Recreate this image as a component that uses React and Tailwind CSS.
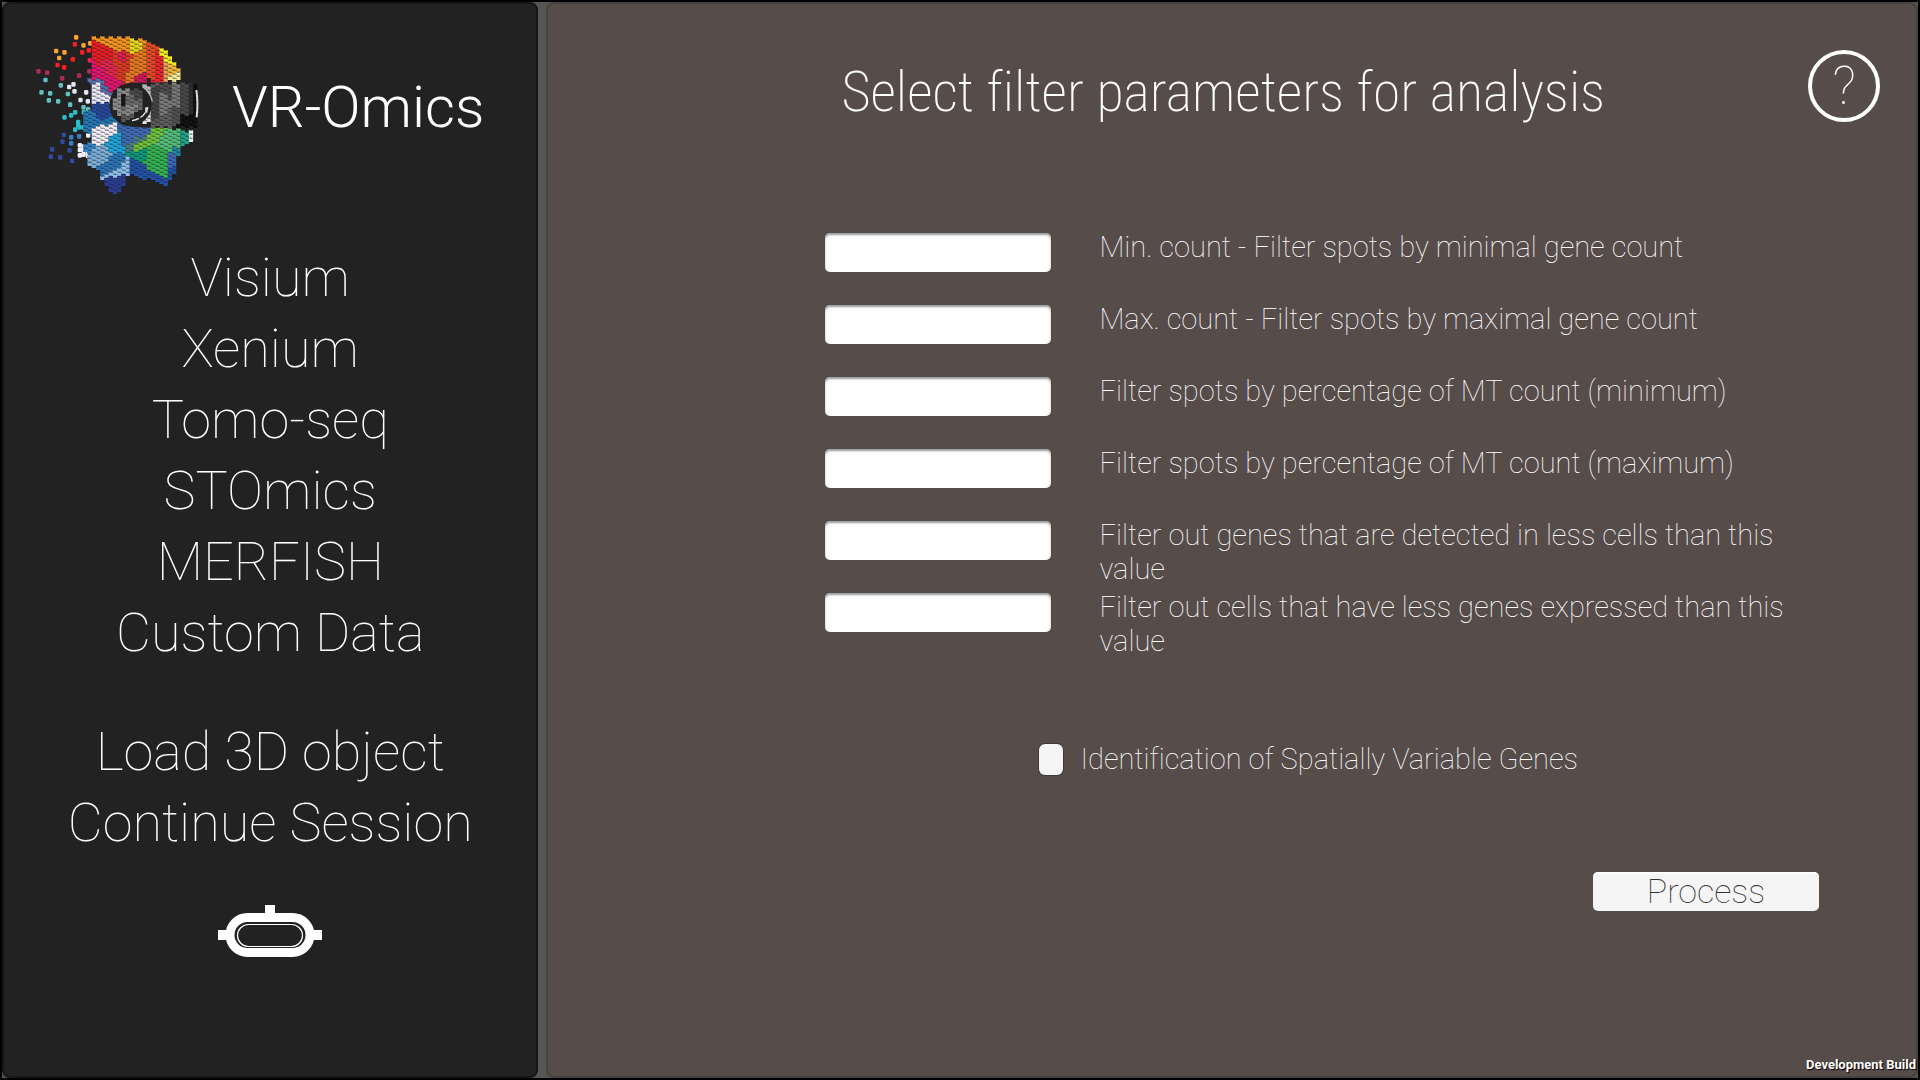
import React from "react";

/* ---------- Logo mosaic ---------- */

const COL = 12.67;
const ROW = 12;

// Colour patches of the head; later patches are painted over earlier ones.
const PATCHES = [
  ["#f7941d", [[220, 54], [330, 54], [376, 68], [376, 110], [300, 100], [220, 66]]],
  ["#ed1c24", [[220, 62], [258, 72], [285, 96], [300, 150], [270, 190], [220, 150]]],
  ["#e03a24", [[275, 92], [345, 98], [345, 140], [310, 186], [270, 180]]],
  ["#e6204a", [[285, 90], [322, 94], [322, 122], [296, 124]]],
  ["#e8244c", [[236, 120], [262, 110], [292, 150], [286, 185], [250, 165]]],
  ["#e6146e", [[220, 118], [232, 140], [296, 178], [312, 196], [272, 216], [220, 176]]],
  ["#ea7a20", [[352, 74], [376, 68], [376, 158], [310, 192], [330, 130]]],
  ["#e8d820", [[322, 56], [362, 66], [360, 98], [330, 108]]],
  ["#e84a24", [[374, 70], [412, 82], [412, 188], [374, 165]]],
  ["#f0242c", [[400, 84], [428, 98], [428, 188], [400, 188]]],
  ["#d81858", [[338, 178], [362, 158], [376, 164], [376, 188], [320, 194]]],
  ["#f8f020", [[412, 84], [438, 98], [468, 140], [472, 156], [426, 112]]],
  ["#f7a060", [[426, 120], [440, 128], [440, 184], [426, 184]]],
  ["#f5b83c", [[438, 120], [472, 150], [474, 172], [438, 168]]],
  ["#faee9c", [[438, 165], [474, 158], [476, 182], [438, 182]]],
  ["#5b6fb0", [[212, 176], [236, 172], [272, 212], [264, 230], [230, 196], [212, 190]]],
  ["#e8eaf8", [[222, 188], [236, 190], [240, 212], [270, 224], [268, 252], [222, 250]]],
  ["#2648a0", [[224, 250], [268, 248], [290, 305], [216, 305], [212, 270]]],
  ["#2478b8", [[199, 280], [222, 272], [230, 300], [280, 290], [312, 318], [300, 360], [199, 330]]],
  ["#3f6ab8", [[296, 316], [402, 318], [376, 350], [312, 385], [300, 345]]],
  ["#1ea6e0", [[246, 378], [286, 332], [302, 340], [316, 402], [290, 412]]],
  ["#2e86c8", [[199, 375], [222, 365], [222, 396], [199, 396]]],
  ["#f4f0fa", [[212, 340], [222, 325], [286, 306], [286, 340], [254, 372], [222, 372]]],
  ["#7cb0dc", [[212, 402], [226, 372], [250, 374], [290, 412], [240, 442], [212, 434]]],
  ["#2a76b8", [[234, 442], [280, 406], [302, 400], [318, 424], [250, 464]]],
  ["#90c0f0", [[250, 464], [312, 432], [312, 406], [322, 406], [334, 456], [290, 476], [250, 474]]],
  ["#2c3c94", [[252, 476], [320, 466], [302, 506], [290, 526], [280, 514]]],
  ["#4a8088", [[310, 378], [350, 352], [376, 346], [360, 380], [318, 396]]],
  ["#70c43c", [[320, 396], [372, 360], [400, 324], [438, 324], [424, 352], [360, 398]]],
  ["#52c078", [[438, 330], [478, 330], [476, 382], [440, 402], [384, 384], [424, 350]]],
  ["#32b452", [[376, 384], [400, 372], [440, 392], [440, 476], [364, 438]]],
  ["#0a9a80", [[322, 396], [386, 386], [366, 440], [330, 420]]],
  ["#2050a8", [[324, 414], [370, 436], [440, 474], [440, 440], [458, 440], [456, 478], [436, 490], [326, 458]]],
  ["#406ab8", [[440, 394], [468, 394], [466, 430], [440, 446]]],
  ["#2088a0", [[452, 384], [482, 380], [482, 400], [452, 400]]],
  ["#20a488", [[476, 332], [516, 336], [510, 360], [476, 374]]],
  ["#dff8ec", [[504, 334], [520, 336], [520, 356], [492, 366], [506, 352]]],
];

const VISOR = [
  ["#b8b8b8", [[364, 200], [400, 196], [400, 216], [380, 218]]],
  ["#5a5a5a", [[398, 196], [426, 194], [426, 318], [398, 318]]],
  ["#444444", [[398, 210], [412, 200], [412, 300], [398, 300]]],
  ["#7a7a7a", [[424, 214], [450, 230], [450, 268], [424, 290]]],
  ["#4c4c4c", [[424, 194], [452, 194], [452, 236], [424, 216]]],
  ["#5e5e5e", [[424, 286], [452, 268], [452, 318], [424, 318]]],
  ["#787878", [[450, 194], [476, 194], [476, 262], [450, 262]]],
  ["#505050", [[450, 262], [476, 262], [476, 318], [450, 318]]],
  ["#484848", [[476, 194], [502, 192], [502, 290], [476, 290]]],
  ["#0c0c0c", [[476, 290], [514, 280], [514, 192], [524, 192], [524, 320], [476, 318]]],
  ["#2c2c2c", [[502, 192], [514, 192], [514, 280], [502, 286]]],
  ["#e4e4e4", [[372, 296], [396, 256], [398, 306], [374, 306]]],
];

const LENS = [
  ["#8c8c8c", [[288, 232], [300, 210], [330, 206], [330, 222], [306, 232], [298, 288], [288, 270]]],
  ["#6a6a6a", [[300, 236], [330, 222], [360, 222], [360, 268], [336, 284], [300, 264]]],
  ["#8a8a8a", [[322, 258], [352, 250], [340, 282], [310, 276]]],
  ["#484848", [[336, 208], [360, 216], [360, 238], [336, 232]]],
  ["#151515", [[298, 232], [322, 220], [322, 238], [310, 264], [298, 260]]],
  ["#585858", [[298, 280], [336, 284], [334, 300], [306, 296]]],
];

// Loose fragments: colour, then their centre points.
const DOTS = [
  ["#fba130", [[168, 52], [190, 76], [210, 70], [108, 93], [133, 97], [117, 114]]],
  ["#fa1e1e", [[164, 73], [186, 97], [206, 91], [158, 118], [112, 135], [132, 142]]],
  ["#e6244c", [[209, 121], [222, 116]]],
  ["#e6146e", [[222, 130]]],
  ["#b0285c", [[55, 154], [81, 158], [126, 175], [177, 167], [207, 154]]],
  ["#60c0c0", [[76, 180], [122, 196], [64, 217], [90, 220], [143, 222], [86, 241], [114, 244], [150, 254], [190, 262], [204, 268]]],
  ["#e4e6fa", [[160, 193], [147, 201], [163, 214], [198, 217], [181, 240], [203, 244], [224, 238]]],
  ["#2cbccc", [[165, 277], [191, 277], [153, 286], [133, 292], [174, 306], [174, 316], [165, 329], [178, 322], [190, 322]]],
  ["#3a7cc8", [[177, 349], [153, 352], [153, 370]]],
  ["#3048a0", [[131, 345], [127, 365], [96, 388], [148, 391], [92, 410], [120, 412], [156, 423]]],
  ["#f4f0fa", [[204, 346], [179, 376], [190, 380], [179, 390], [190, 392], [179, 406], [190, 404], [203, 400], [203, 407], [216, 401]]],
  ["#5b70b8", [[214, 184]]],
];

function inside(x, y, points) {
  let hit = false;
  for (let i = 0, j = points.length - 1; i < points.length; j = i++) {
    const [xi, yi] = points[i];
    const [xj, yj] = points[j];
    if (yi > y !== yj > y && x < ((xj - xi) * (y - yi)) / (yj - yi) + xi) hit = !hit;
  }
  return hit;
}

function colorAt(x, y, patches) {
  let color = null;
  for (const [fill, points] of patches) if (inside(x, y, points)) color = fill;
  return color;
}

// Samples the cell's centre first, then its sides, so that cells on the rim are kept.
const SAMPLES = [[0, 0], [-5, 0], [5, 0], [0, -4], [0, 4]];

function buildTiles(patches) {
  const byColor = {};
  let joints = "";
  for (let c = 14; c < 43; c++) {
    for (let r = 3; r < 46; r++) {
      const x = c * COL + 6;
      const y = r * ROW + (c % 2 ? 6 : 0);
      let color = null;
      for (const [dx, dy] of SAMPLES) color = color || colorAt(x + dx, y + dy, patches);
      if (!color) continue;
      const l = x - 6.4;
      const t = y - 6;
      byColor[color] = (byColor[color] || "") + `M${l} ${t}h13v12.2h-13z`;
      joints += `M${l + 2} ${t - 1}h9v2.8h-9zM${l - 0.6} ${t + 7}h1.8v3h-1.8z`;
    }
  }
  return { fills: Object.entries(byColor), joints };
}

const HEAD_TILES = buildTiles(PATCHES);
const VISOR_TILES = buildTiles(VISOR);
const LENS_TILES = buildTiles(LENS);

function Tiles({ tiles }) {
  return (
    <g>
      {tiles.fills.map(([fill, d]) => (
        <path key={fill} fill={fill} d={d} />
      ))}
      <path fill="#222" d={tiles.joints} />
    </g>
  );
}

function Logo() {
  return (
    <svg viewBox="0 0 600 570" className="w-[200px] shrink-0" role="img" aria-label="VR-Omics logo">
      {DOTS.map(([fill, points]) => (
        <g key={fill} fill={fill}>
          {points.map(([x, y]) => (
            <rect key={`${x}-${y}`} x={x - 6} y={y - 7} width="13" height="14" rx="4" />
          ))}
        </g>
      ))}
      <Tiles tiles={HEAD_TILES} />
      <path fill="#222" d="M290 205Q310 188 345 188L528 186V326L400 323Q330 323 305 312Z" />
      <circle cx="333" cy="254" r="65" fill="#222" />
      <Tiles tiles={VISOR_TILES} />
      <circle cx="333" cy="254" r="62" fill="#222" />
      <Tiles tiles={LENS_TILES} />
      <path d="M336 302Q372 296 384 262" fill="none" stroke="#e8e8e8" strokeWidth="4" strokeDasharray="22 5" />
      <path d="M379 262v16" fill="none" stroke="#ddd" strokeWidth="7" />
      <path d="M368 200Q390 214 397 244" fill="none" stroke="#bbb" strokeWidth="4" />
      <path d="M529 210Q535 250 530 292" fill="none" stroke="#ddd" strokeWidth="6" />
    </svg>
  );
}

function HeadsetIcon() {
  return (
    <svg viewBox="0 0 104 53" className="w-[104px]" fill="none" aria-hidden="true">
      <path fill="#fff" d="M47 0h10v10H47zM0 25h12v10H0zM92 25h12v10H92z" />
      <rect x="12" y="12.5" width="80" height="35" rx="17.5" stroke="#fff" strokeWidth="9" />
      <rect x="19.5" y="19.5" width="65" height="22" rx="11" stroke="#fff" strokeWidth="1.2" />
    </svg>
  );
}

/* ---------- Page ---------- */

const DATA_SOURCES = ["Visium", "Xenium", "Tomo-seq", "STOmics", "MERFISH", "Custom Data"];
const SESSION_ACTIONS = ["Load 3D object", "Continue Session"];

const FILTERS = [
  ["min-count", "Min. count - Filter spots by minimal gene count"],
  ["max-count", "Max. count - Filter spots by maximal gene count"],
  ["mt-min", "Filter spots by percentage of MT count (minimum)"],
  ["mt-max", "Filter spots by percentage of MT count (maximum)"],
  ["min-cells", "Filter out genes that are detected in less cells than this value"],
  ["min-genes", "Filter out cells that have less genes expressed than this value"],
];

function MenuGroup({ items }) {
  return (
    <ul>
      {items.map((item) => (
        <li key={item}>
          <button type="button" className="block w-full text-center text-[54px] leading-[71px] font-thin">
            {item}
          </button>
        </li>
      ))}
    </ul>
  );
}

function Sidebar() {
  return (
    <aside className="w-[28%] shrink-0 rounded-lg border-2 border-[#151515] bg-[#222222]">
      <div className="flex items-center gap-3 pt-4 pl-4">
        <Logo />
        <h1 className="pb-4 text-[58px] leading-[71px] font-light whitespace-nowrap">VR-Omics</h1>
      </div>
      <nav className="mt-8 flex flex-col gap-12" aria-label="Data sources">
        <MenuGroup items={DATA_SOURCES} />
        <MenuGroup items={SESSION_ACTIONS} />
      </nav>
      <button type="button" aria-label="VR mode" className="mx-auto mt-[47px] block">
        <HeadsetIcon />
      </button>
    </aside>
  );
}

export default function App() {
  return (
    <div className="flex min-h-screen gap-2 border-2 border-black bg-[#555555] font-['Roboto',sans-serif] text-white [font-variant-ligatures:none]">
      <Sidebar />
      <main className="flex flex-1 flex-col rounded-lg border-2 border-[#4a4241] bg-[#564c4a]">
        <header className="flex items-start justify-between pt-[46px] pr-9 pl-[90px]">
          <h2 className="mt-1.5 flex-1 text-center font-['Roboto_Condensed','Roboto',sans-serif] text-[56px] leading-[72px] font-extralight">
            Select filter parameters for analysis
          </h2>
          <button
            type="button"
            aria-label="Help"
            className="flex size-[72px] items-center justify-center rounded-full border-4 border-white text-[54px] leading-none font-thin"
          >
            ?
          </button>
        </header>

        <form className="mt-[102px] flex flex-col">
          <div className="pl-[277px]">
            {FILTERS.map(([id, label]) => (
              <div key={id} className="flex min-h-[72px] items-start gap-12">
                <input
                  id={id}
                  type="text"
                  className="mt-[3px] h-[39px] w-[226px] rounded-[5px] bg-white px-3 text-2xl text-[#323232] inset-shadow-[0_2px_2px_#999999]"
                />
                <label htmlFor={id} className="max-w-[690px] flex-1 text-[29px] leading-[34px] font-thin">
                  {label}
                </label>
              </div>
            ))}
          </div>

          <div className="mt-20 flex items-center gap-[17px] pl-[491px]">
            <input
              id="svg-genes"
              type="checkbox"
              className="h-[31px] w-6 appearance-none rounded-md bg-[#f5f5f5] shadow-[0_0_0_1px_#403a39] checked:bg-neutral-400"
            />
            <label htmlFor="svg-genes" className="text-[29px] leading-[34px] font-thin">
              Identification of Spatially Variable Genes
            </label>
          </div>

          <button
            type="submit"
            className="mt-24 mr-[97px] h-[39px] w-[226px] self-end rounded-[5px] bg-[#f5f5f5] text-[34px] leading-[39px] font-thin text-[#323232] inset-shadow-[0_2px_0_#ffffff]"
          >
            Process
          </button>
        </form>

        <p className="mt-auto text-right text-[13px] leading-[22px] font-bold [text-shadow:1px_1px_1px_#000000]">
          Development Build
        </p>
      </main>
    </div>
  );
}
